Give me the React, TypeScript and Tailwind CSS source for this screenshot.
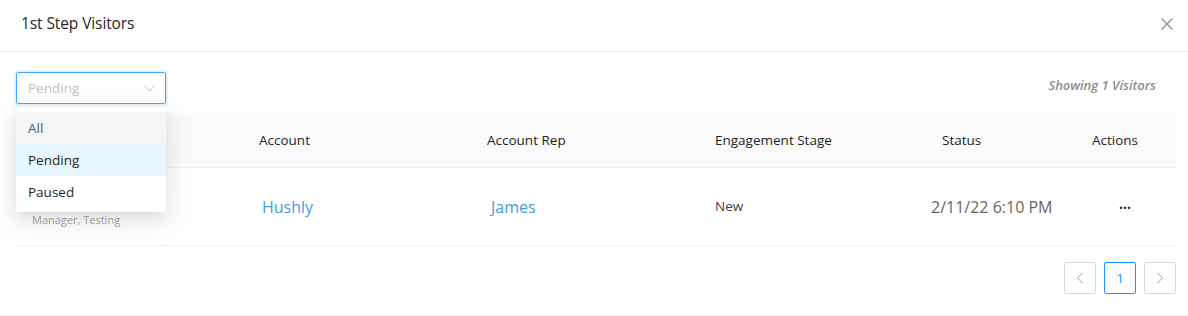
import React from 'react';

const font = { fontFamily: '"Open Sans", "Noto Sans", sans-serif' };

const columns = [
  { key: 'visitor', label: '', width: 'w-[227px]' },
  { key: 'account', label: 'Account', width: 'w-[228px]' },
  { key: 'rep', label: 'Account Rep', width: 'w-[228px]' },
  { key: 'stage', label: 'Engagement Stage', width: 'w-[227px]' },
  { key: 'status', label: 'Status', width: 'w-[150px]' },
  { key: 'actions', label: 'Actions', width: 'w-[100px]' },
];

const options = ['All', 'Pending', 'Paused'];

const App = () => {
  return (
    <div className="w-[1188px] h-[316px] bg-white relative overflow-hidden border-b border-[#eeeeee]" style={font}>
      {/* Header */}
      <div className="h-[52px] border-b border-[#ececec] flex items-center justify-between pl-[21px] pr-[14px]">
        <h2 className="text-[15.5px] font-medium text-[#262626] tracking-[-0.1px] -mt-[3px]">1st Step Visitors</h2>
        <svg width="14" height="14" viewBox="0 0 14 14" className="text-[#8c8c8c] -mt-[3px]">
          <path d="M1.5 1.5 L12.5 12.5 M12.5 1.5 L1.5 12.5" stroke="currentColor" strokeWidth="1.2" fill="none" />
        </svg>
      </div>

      <div className="px-[16px] pr-[12px]">
        {/* Toolbar */}
        <div className="mt-[20px] flex items-center justify-between">
          <div className="relative">
            <div className="w-[150px] h-[32px] border border-[#40a9ff] rounded-[2px] shadow-[0_0_0_2px_rgba(24,144,255,0.12)] flex items-center justify-between pl-[11px] pr-[10px]">
              <span className="text-[13.5px] text-[#bfbfbf]">Pending</span>
              <svg width="11" height="7" viewBox="0 0 11 7" className="text-[#bfbfbf]">
                <path d="M0.5 0.8 L5.5 6 L10.5 0.8" stroke="currentColor" strokeWidth="1" fill="none" />
              </svg>
            </div>
            {/* Dropdown menu */}
            <div className="absolute left-0 top-[36px] z-10 w-[150px] bg-white rounded-[2px] py-[4px] shadow-[0_3px_6px_-4px_rgba(0,0,0,0.12),0_6px_16px_0_rgba(0,0,0,0.08),0_9px_28px_8px_rgba(0,0,0,0.05)]">
              {options.map((opt) => (
                <div
                  key={opt}
                  className={`h-[32px] flex items-center px-[12px] text-[13.5px] ${
                    opt === 'All'
                      ? 'bg-[#f5f5f5] text-[#595959]'
                      : opt === 'Pending'
                      ? 'bg-[#e6f7ff] text-[#262626] font-medium'
                      : 'text-[#262626]'
                  }`}
                >
                  {opt}
                </div>
              ))}
            </div>
          </div>
          <span className="text-[13px] italic font-semibold text-[#8c8c8c] mr-[20px] -mt-[4px]">Showing 1 Visitors</span>
        </div>

        {/* Table */}
        <div className="mt-[9px] w-[1160px]">
          <div className="flex h-[55px] bg-[#fafafa] border-b border-[#f0f0f0] items-center">
            {columns.map((col) => (
              <div key={col.key} className={`${col.width} px-[16px] text-[13.5px] font-medium text-[#1f1f1f]`}>
                {col.label}
              </div>
            ))}
          </div>
          <div className="flex h-[78px] border-b border-[#f0f0f0] items-center">
            <div className="w-[227px] px-[16px] pt-[22px]">
              <span className="text-[11px] text-[#a6a6a6]">Manager, Testing</span>
            </div>
            <div className="w-[228px] px-[19px] text-[16px] text-[#4a9ad6]">Hushly</div>
            <div className="w-[228px] px-[20px] text-[16px] text-[#4a9ad6]">James</div>
            <div className="w-[227px] px-[16px] text-[13.5px] font-normal text-[#404040]">New</div>
            <div className="w-[150px] pl-[5px] text-[16px] text-[#666666] whitespace-nowrap">2/11/22 6:10 PM</div>
            <div className="w-[100px] pl-[43px] text-[14px] font-bold text-[#262626] leading-none pb-[6px]">...</div>
          </div>
        </div>

        {/* Pagination */}
        <div className="w-[1160px] mt-[16px] flex justify-end gap-[8px]">
          <button className="w-[32px] h-[32px] border border-[#d9d9d9] rounded-[2px] flex items-center justify-center">
            <svg width="8" height="12" viewBox="0 0 8 12" className="text-[#c4c4c4]">
              <path d="M6.5 1 L1.5 6 L6.5 11" stroke="currentColor" strokeWidth="1.1" fill="none" />
            </svg>
          </button>
          <button className="w-[32px] h-[32px] border border-[#1890ff] rounded-[2px] flex items-center justify-center text-[13.5px] text-[#1890ff]">
            1
          </button>
          <button className="w-[32px] h-[32px] border border-[#d9d9d9] rounded-[2px] flex items-center justify-center">
            <svg width="8" height="12" viewBox="0 0 8 12" className="text-[#c4c4c4]">
              <path d="M1.5 1 L6.5 6 L1.5 11" stroke="currentColor" strokeWidth="1.1" fill="none" />
            </svg>
          </button>
        </div>
      </div>
    </div>
  );
};

export default App;
